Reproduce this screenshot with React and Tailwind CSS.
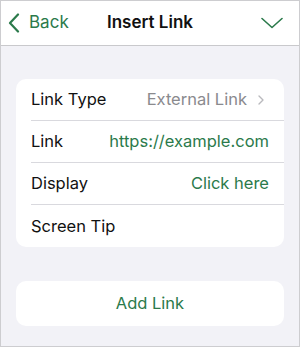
import { ChevronRight } from "lucide-react";

const rows = [
  { label: "Link Type", value: "External Link", tone: "muted", chevron: true },
  { label: "Link", value: "https://example.com", tone: "green" },
  { label: "Display", value: "Click here", tone: "green" },
  { label: "Screen Tip", value: "" },
];

function Row({ label, value, tone, chevron, last }) {
  return (
    <div className="flex h-[42px] pl-[15px]">
      <div
        className={`flex flex-1 items-center justify-between pr-[15px] ${
          last ? "" : "border-b border-[#d9d9de]"
        }`}
      >
        <span className="text-[#111111]">{label}</span>
        <span className="flex items-center gap-[6px]">
          <span className={tone === "green" ? "text-[#2b7a4b]" : "text-[#8a8a8e]"}>
            {value}
          </span>
          {chevron && (
            <ChevronRight className="w-[16px] h-[16px] text-[#b9b9bd]" strokeWidth={2} />
          )}
        </span>
      </div>
    </div>
  );
}

export default function App() {
  return (
    <div
      className="w-[300px] h-[347px] flex flex-col bg-[#f2f2f7] border border-[#cdcdd0] text-[16.5px] overflow-hidden"
      style={{ fontFamily: "Inter, 'Liberation Sans', sans-serif" }}
    >
      {/* Header */}
      <div className="relative flex items-center h-[45px] bg-white border-b border-[#c9c9cc] shrink-0">
        <button className="flex items-center text-[#2b7a4b] pl-[7px]">
          <svg width="12" height="20" viewBox="0 0 12 20" fill="none">
            <path d="M10 1.5 L2 10 L10 18.5" stroke="#2b7a4b" strokeWidth="2.2" strokeLinecap="round" strokeLinejoin="round" />
          </svg>
          <span className="ml-[9px] text-[17px]">Back</span>
        </button>
        <div className="absolute left-0 right-0 text-center font-semibold text-[17px] text-[#111111] pointer-events-none">
          Insert Link
        </div>
        <svg
          className="ml-auto mr-[16px]"
          width="22"
          height="12"
          viewBox="0 0 22 12"
          fill="none"
        >
          <path d="M1 1.5 L11 10.5 L21 1.5" stroke="#2b7a4b" strokeWidth="1.6" strokeLinecap="round" strokeLinejoin="round" />
        </svg>
      </div>

      {/* Link fields */}
      <div className="mx-[15px] mt-[33px] bg-white rounded-[10px] overflow-hidden">
        {rows.map((row, i) => (
          <Row key={row.label} {...row} last={i === rows.length - 1} />
        ))}
      </div>

      {/* Add button */}
      <button className="mx-[15px] mt-[34px] h-[45px] bg-white rounded-[10px] text-[#2b7a4b]">
        Add Link
      </button>
    </div>
  );
}
